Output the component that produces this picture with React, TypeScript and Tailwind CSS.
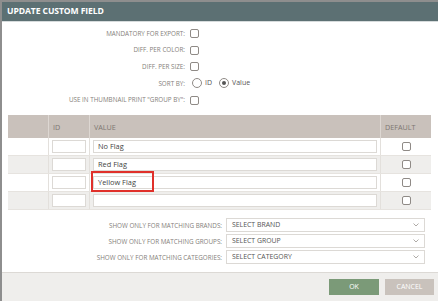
import React from 'react';

const font = { fontFamily: '"Open Sans", "Liberation Sans", sans-serif' };

function Check({ className = '' }: { className?: string }) {
  return <span className={`inline-block w-[9px] h-[9px] rounded-[2px] border border-[#8f8a86] bg-white ${className}`} />;
}

function FormRow({ label, children }: { label: string; children: React.ReactNode }) {
  return (
    <div className="flex items-center h-[16.7px]">
      <div className="w-[188px] text-right pr-[5px] text-[6.3px] text-[#85807b] uppercase">{label}</div>
      <div className="flex items-center">{children}</div>
    </div>
  );
}

const rows = ['No Flag', 'Red Flag', 'Yellow Flag', ''];

function Select({ label }: { label: string }) {
  return (
    <div className="flex items-center justify-between w-[199px] h-[14px] border border-[#dcd9d5] bg-white px-[5px]">
      <span className="text-[6.9px] text-[#555]">{label}</span>
      <svg width="6" height="4" viewBox="0 0 6 4" fill="none" stroke="#9a9590" strokeWidth="0.8">
        <path d="M0.5 0.5 L3 3 L5.5 0.5" />
      </svg>
    </div>
  );
}

export default function App() {
  return (
    <div style={font} className="w-[438px] h-[301px] overflow-hidden bg-white border-t-2 border-l-2 border-[#8e8e8e] flex flex-col">
      <div className="h-[20px] bg-[#5c7073] flex items-center px-[5px] border-b border-[#d6dbdc]">
        <span className="text-white font-bold text-[8.6px] tracking-[-0.1px]">UPDATE CUSTOM FIELD</span>
      </div>

      <div className="pt-[3px]">
        <FormRow label="Mandatory for export:"><Check /></FormRow>
        <FormRow label="Diff. per color:"><Check /></FormRow>
        <FormRow label="Diff. per size:"><Check /></FormRow>
        <FormRow label="Sort by:">
          <span className="w-[10px] h-[10px] rounded-full border border-[#8f8a86] ml-[2px]" />
          <span className="ml-[3px] text-[7px] text-[#555]">ID</span>
          <span className="ml-[7px] w-[10px] h-[10px] rounded-full border border-[#8f8a86] flex items-center justify-center">
            <span className="w-[4px] h-[4px] rounded-full bg-[#555]" />
          </span>
          <span className="ml-[3px] text-[7px] text-[#555]">Value</span>
        </FormRow>
        <FormRow label='Use in thumbnail print "Group by":'><Check /></FormRow>
      </div>

      <div className="mx-[6px] mt-[7px] w-[423px]">
        <div className="flex h-[23px] bg-[#c9c1bb] text-[7.2px] text-[#7d7772]">
          <div className="w-[41px] border-r border-[#ddd7d2]" />
          <div className="w-[41px] border-r border-[#ddd7d2] flex items-center pl-[4px]">ID</div>
          <div className="w-[291px] border-r border-[#ddd7d2] flex items-center pl-[4px]">VALUE</div>
          <div className="flex-1 flex items-center pl-[4px]">DEFAULT</div>
        </div>
        {rows.map((v, i) => (
          <div key={i} className={`flex h-[18px] border-b border-[#e6e3df] ${i % 2 ? 'bg-[#efeeec]' : 'bg-white'}`}>
            <div className="w-[41px] border-r border-[#e3e0dc]" />
            <div className="w-[41px] border-r border-[#e3e0dc] flex items-center justify-center">
              <div className="w-[34px] h-[13px] border border-[#dcd9d5] bg-white" />
            </div>
            <div className="w-[291px] border-r border-[#e3e0dc] flex items-center px-[3px] relative">
              <div className="w-[284px] h-[13px] border border-[#dcd9d5] bg-white flex items-center px-[4px] text-[7.4px] text-[#444]">{v}</div>
              {v === 'Yellow Flag' && (
                <div className="absolute left-[1px] top-[-3px] w-[63px] h-[21px] border-2 border-[#e0302a]" />
              )}
            </div>
            <div className="flex-1 flex items-center justify-center">
              <Check />
            </div>
          </div>
        ))}
      </div>

      <div className="mt-[8px] flex flex-col gap-[2px]">
        {[
          ['Show only for matching brands:', 'SELECT BRAND'],
          ['Show only for matching groups:', 'SELECT GROUP'],
          ['Show only for matching categories:', 'SELECT CATEGORY'],
        ].map(([l, s]) => (
          <div key={l} className="flex items-center">
            <div className="w-[224px] text-right pr-[4px] text-[6.3px] text-[#85807b] uppercase">{l}</div>
            <Select label={s} />
          </div>
        ))}
      </div>

      <div className="mt-auto h-[29px] bg-[#efeeec] border-t border-[#dcd9d5] flex items-center justify-end gap-[6px] pr-[4px]">
        <button className="w-[50px] h-[16px] bg-[#7b9a78] text-white text-[7px]">OK</button>
        <button className="w-[49px] h-[16px] bg-[#c9c2bc] text-white text-[7px]">CANCEL</button>
      </div>
    </div>
  );
}
